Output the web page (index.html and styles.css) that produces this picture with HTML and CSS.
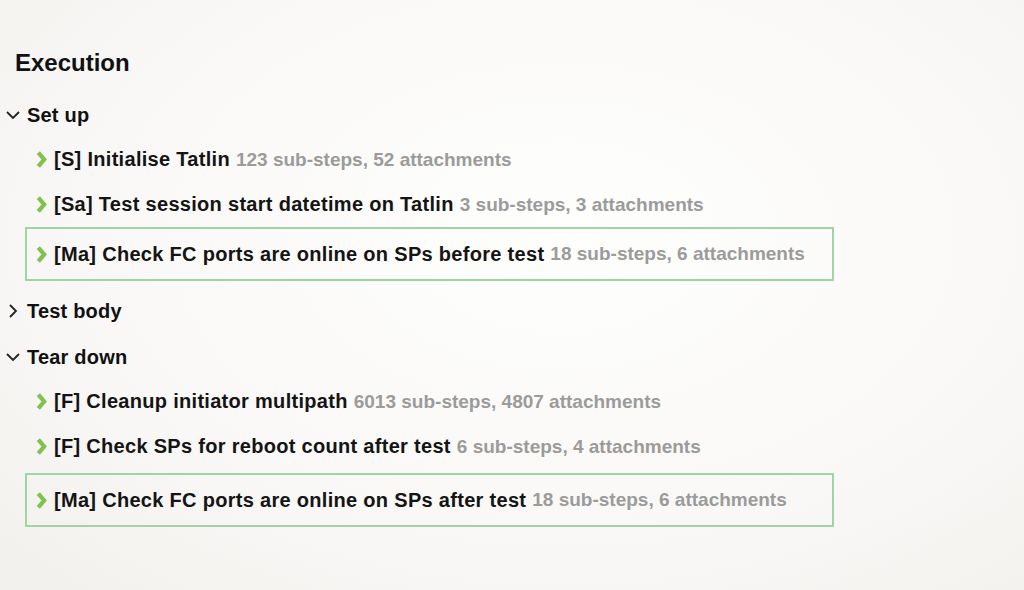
FILE: index.html
```html
<!DOCTYPE html>
<html>
    <head>
        <meta charset="utf-8">
        <title>Execution</title>
        <link rel="stylesheet" href="styles.css">
    </head>
    <body>
        <h1 class="title">Execution</h1>

        <div class="section setup">
            <div class="section-head">
                <svg class="caret" viewBox="0 0 14 14"><path d="M1 4 L7 10 L13 4"/></svg>
                <span>Set up</span>
            </div>
            <div class="step">
                <svg class="arrow" viewBox="0 0 10 16"><path d="M2 1.5 L7.5 8 L2 14.5"/></svg>
                <span class="name">[S] Initialise Tatlin</span>
                <span class="meta">123 sub-steps, 52 attachments</span>
            </div>
            <div class="step">
                <svg class="arrow" viewBox="0 0 10 16"><path d="M2 1.5 L7.5 8 L2 14.5"/></svg>
                <span class="name">[Sa] Test session start datetime on Tatlin</span>
                <span class="meta">3 sub-steps, 3 attachments</span>
            </div>
            <div class="step selected">
                <svg class="arrow" viewBox="0 0 10 16"><path d="M2 1.5 L7.5 8 L2 14.5"/></svg>
                <span class="name">[Ma] Check FC ports are online on SPs before test</span>
                <span class="meta">18 sub-steps, 6 attachments</span>
            </div>
        </div>

        <div class="section">
            <div class="section-head">
                <svg class="caret" viewBox="0 0 14 14"><path d="M4 1 L10 7 L4 13"/></svg>
                <span>Test body</span>
            </div>
        </div>

        <div class="section teardown">
            <div class="section-head">
                <svg class="caret" viewBox="0 0 14 14"><path d="M1 4 L7 10 L13 4"/></svg>
                <span>Tear down</span>
            </div>
            <div class="step">
                <svg class="arrow" viewBox="0 0 10 16"><path d="M2 1.5 L7.5 8 L2 14.5"/></svg>
                <span class="name">[F] Cleanup initiator multipath</span>
                <span class="meta">6013 sub-steps, 4807 attachments</span>
            </div>
            <div class="step">
                <svg class="arrow" viewBox="0 0 10 16"><path d="M2 1.5 L7.5 8 L2 14.5"/></svg>
                <span class="name">[F] Check SPs for reboot count after test</span>
                <span class="meta">6 sub-steps, 4 attachments</span>
            </div>
            <div class="step selected">
                <svg class="arrow" viewBox="0 0 10 16"><path d="M2 1.5 L7.5 8 L2 14.5"/></svg>
                <span class="name">[Ma] Check FC ports are online on SPs after test</span>
                <span class="meta">18 sub-steps, 6 attachments</span>
            </div>
        </div>
    </body>
</html>
```

FILE: styles.css
```css
*{box-sizing:border-box;}
body,html{
    margin: 0;
    width:100%;
    height:100%;
    font-family: "Liberation Sans", Arial, sans-serif;
    color: #111;
}
body {
    padding: 40px 0 0 0;
    background: radial-gradient(ellipse at 55% 40%, #fefefd 0%, #f9f8f6 60%, #f1f0ed 100%);
}
.title {font-size: 24px; font-weight: bold; margin: 0 0 7px 15px; height: 46px; line-height: 46px;}
.section {display: flex; flex-direction: column; margin-bottom: 2px;}
.setup {margin-bottom: 8px;}
.section-head {display: flex; align-items: center; height: 44px; font-size: 20px; font-weight: bold; padding-left: 6px; gap: 7px; letter-spacing: 0.2px;}
.caret {width: 14px; height: 14px; fill: none; stroke: #222; stroke-width: 1.8;}
.step {display: flex; align-items: center; height: 45px; font-size: 20px; font-weight: bold; padding-left: 36px; white-space: nowrap;}
.arrow {width: 11px; height: 17px; fill: none; stroke: #80c250; stroke-width: 4; margin-right: 7px;}
.name {color: #141414; letter-spacing: 0.3px;}
.meta {color: #9b9b9b; margin-left: 6px; font-size: 19px;}
.step.selected {width: 809px; height: 54px; margin: 0 0 0 25px; padding-left: 9px; border: 2px solid #9fd5a2;}
.teardown .selected {margin-top: 4px;}
```
